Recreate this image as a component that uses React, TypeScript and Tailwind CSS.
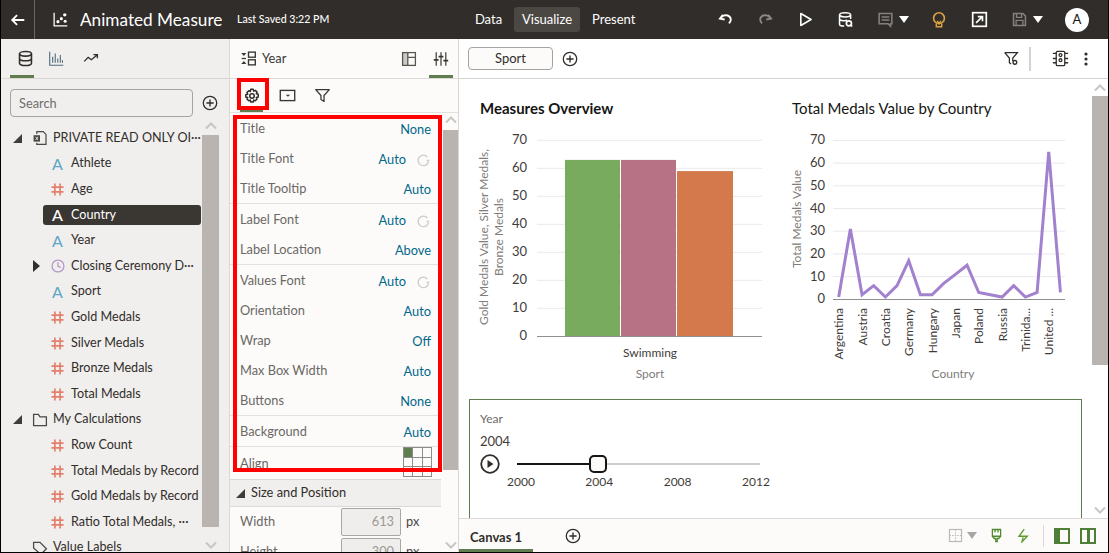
import { ReactNode } from "react";

const fontStack = "font-['Lato','Noto_Sans',sans-serif]";

type IconProps = { className?: string; children: ReactNode; size?: number };

function Ico({ className = "", children, size = 20 }: IconProps) {
  return (
    <svg
      width={size}
      height={size}
      viewBox="0 0 20 20"
      fill="none"
      stroke="currentColor"
      strokeWidth="1.5"
      className={`shrink-0 ${className}`}
    >
      {children}
    </svg>
  );
}

function PlusCircle({ className = "" }: { className?: string }) {
  return (
    <Ico size={16} className={className}>
      <circle cx="10" cy="10" r="8.4" strokeWidth="1.6" />
      <path d="M10 5.5v9M5.5 10h9" strokeWidth="1.7" />
    </Ico>
  );
}

function Caret({ className = "" }: { className?: string }) {
  return (
    <svg width="10" height="7" viewBox="0 0 10 7" className={`shrink-0 ${className}`}>
      <path d="M0 0h10L5 7z" fill="currentColor" />
    </svg>
  );
}

function Chevron({ down = false }: { down?: boolean }) {
  return (
    <svg width="12" height="8" viewBox="0 0 12 8" className="shrink-0 text-[#c9c6c2]">
      <path
        d={down ? "M1 1.5l5 5 5-5" : "M1 6.5l5-5 5 5"}
        fill="none"
        stroke="currentColor"
        strokeWidth="2"
      />
    </svg>
  );
}

function Hash() {
  return (
    <svg width="13" height="13" viewBox="0 0 14 14" className="shrink-0 text-[#e2806d]">
      <path d="M4.2 0.5v13M9.8 0.5v13M0.5 4.4h13M0.5 9.6h13" stroke="currentColor" strokeWidth="1.8" />
    </svg>
  );
}

function Refresh() {
  return (
    <Ico size={15} className="text-[#cfcdca]">
      <path d="M16.5 12a7 7 0 1 1-1.2-6.5" strokeWidth="1.8" />
      <path d="M18.5 9h-5l2.5 3.4z" fill="currentColor" stroke="none" />
    </Ico>
  );
}

function Filter({ className = "" }: { className?: string }) {
  return (
    <Ico size={17} className={className}>
      <path d="M2 3h16l-6.2 7v7l-3.6-2.4V10z" strokeLinejoin="round" />
    </Ico>
  );
}

function HeaderIcons() {
  return (
    <div className="flex items-center text-white">
      <div className="w-[40px] shrink-0 flex justify-center">
        <Ico size={17}>
          <path d="M7 4.500L3.500 9 9 10" strokeWidth="2.200" />
          <path d="M4 9c2-4 7-5 10-3s3 6 0 8.500" strokeWidth="2.200" />
        </Ico>
      </div>
      <div className="w-[40px] shrink-0 flex justify-center text-[#8b8885]">
        <Ico size={17}>
          <path d="M13 4.500L16.500 9 11 10" strokeWidth="2.200" />
          <path d="M16 9c-2-4-7-5-10-3s-3 6 0 8.500" strokeWidth="2.200" />
        </Ico>
      </div>
      <div className="w-[40px] shrink-0 flex justify-center">
        <Ico size={17}>
          <path d="M4.500 3l12 7-12 7z" strokeWidth="1.900" strokeLinejoin="round" />
        </Ico>
      </div>
      <div className="w-[40px] shrink-0 flex justify-center">
        <Ico size={17}>
          <ellipse cx="9.500" cy="4.500" rx="6.500" ry="2.500" strokeWidth="1.800" />
          <path d="M3 4.500v11c0 1.500 3 2.200 5.500 2.200M16 4.500v5M3 10c1.500 1.400 6 2 9 1" strokeWidth="1.800" />
          <circle cx="14" cy="14.500" r="3" strokeWidth="2" />
          <path d="M15 16.500l3 1.500" strokeWidth="2" />
        </Ico>
      </div>
      <div className="w-[40px] shrink-0 flex justify-center text-[#84817e]">
        <Ico size={17}>
          <path d="M2.500 3h15v12h-1.500v3l-3-3h-10.500z" strokeWidth="1.800" />
          <path d="M5.500 7h9M5.500 10.500h9" strokeWidth="1.800" />
        </Ico>
      </div>
      <div className="w-[10px] shrink-0 -ml-[6px] flex">
        <Caret />
      </div>
      <div className="w-[40px] shrink-0 ml-[10px] flex justify-center text-[#d9a441]">
        <Ico size={18}>
          <circle cx="10" cy="8" r="6" strokeWidth="1.800" />
          <path d="M7 14v3.500h6V14M8 11l2 3 2-3" strokeWidth="1.600" />
        </Ico>
      </div>
      <div className="w-[40px] shrink-0 flex justify-center">
        <Ico size={17}>
          <rect x="2" y="2" width="16" height="16" strokeWidth="2" />
          <path d="M6 14l7-7M8 6.500h5.500V12" strokeWidth="2" />
        </Ico>
      </div>
      <div className="w-[40px] shrink-0 flex justify-center text-[#84817e]">
        <Ico size={17}>
          <path d="M3 3h11l3 3v11H3z" strokeWidth="1.800" />
          <path d="M6.500 3v4.500h6V3M6 17v-6h8v6" strokeWidth="1.600" />
        </Ico>
      </div>
      <div className="w-[10px] shrink-0 -ml-[6px] flex">
        <Caret />
      </div>
      <div className="ml-[22px] h-[24px] w-[24px] shrink-0 rounded-full bg-white text-[#161513] text-[13px] flex items-center justify-center">
        A
      </div>
    </div>
  );
}

function Header() {
  return (
    <header className="h-[39px] shrink-0 bg-[#312d2a] text-white flex items-center">
      <div className="w-[34px] shrink-0 h-full border-r border-[#6b6763] flex items-center justify-center">
        <Ico size={18}>
          <path d="M17 10H4M9 4.500L3.500 10 9 15.500" strokeWidth="2" />
        </Ico>
      </div>
      <div className="ml-[17px] w-[19px] shrink-0">
        <Ico size={17}>
          <path d="M2.500 2v15.500H18" strokeWidth="1.500" />
          <circle cx="7" cy="12.500" r="1.800" fill="currentColor" stroke="none" />
          <circle cx="11" cy="9" r="1.800" fill="currentColor" stroke="none" />
          <circle cx="15" cy="4.500" r="2" fill="currentColor" stroke="none" />
          <circle cx="15.500" cy="12" r="1.800" fill="currentColor" stroke="none" />
        </Ico>
      </div>
      <h1 className="ml-[9px] text-[17.200px] leading-none w-[157px] shrink-0 whitespace-nowrap">
        Animated Measure
      </h1>
      <span className="text-[10.600px] font-medium w-[232px] shrink-0 whitespace-nowrap">
        Last Saved 3:22 PM
      </span>
      <nav className="flex items-center text-[13px] w-[236px] shrink-0">
        <span className="w-[39px] text-center">Data</span>
        <span className="ml-[6px] px-[8px] py-[3px] rounded-[3px] bg-[#4b4743] mr-[12px]">Visualize</span>
        <span>Present</span>
      </nav>
      <HeaderIcons />
    </header>
  );
}

type FieldKind = "text" | "num" | "time" | "group" | "folder" | "tag";

const fields: { label: string; kind: FieldKind; active?: boolean; arrow?: boolean }[] = [
  { label: "PRIVATE READ ONLY OI···", kind: "group" },
  { label: "Athlete", kind: "text" },
  { label: "Age", kind: "num" },
  { label: "Country", kind: "text", active: true },
  { label: "Year", kind: "text" },
  { label: "Closing Ceremony D···", kind: "time", arrow: true },
  { label: "Sport", kind: "text" },
  { label: "Gold Medals", kind: "num" },
  { label: "Silver Medals", kind: "num" },
  { label: "Bronze Medals", kind: "num" },
  { label: "Total Medals", kind: "num" },
  { label: "My Calculations", kind: "folder" },
  { label: "Row Count", kind: "num" },
  { label: "Total Medals by Record", kind: "num" },
  { label: "Gold Medals by Record", kind: "num" },
  { label: "Ratio Total Medals, ···", kind: "num" },
  { label: "Value Labels", kind: "tag" },
];

function FieldRow({ label, kind, active, arrow }: (typeof fields)[number]) {
  const top = kind === "group" || kind === "folder" || kind === "tag";
  if (top) {
    return (
      <div className="h-[25.600px] flex items-center text-[12.600px] text-[#302d2a]">
        <div className="w-[31px] pl-[12px] shrink-0">
          {kind !== "tag" && (
            <svg width="9" height="9" viewBox="0 0 9 9" className="text-[#3f3c39]">
              <path d="M9 0v9H0z" fill="currentColor" />
            </svg>
          )}
        </div>
        <Ico size={16} className="text-[#4a4744] mr-[5px]">
          {kind === "group" && (
            <>
              <path d="M6 5V2h8l3.500 3.500V18H6v-2" />
              <rect x="2" y="6.500" width="8" height="8" fill="currentColor" stroke="none" />
              <path d="M4.500 8.500l3 4M7.500 8.500l-3 4" stroke="#f1efed" strokeWidth="1.100" />
            </>
          )}
          {kind === "folder" && <path d="M2 17V3h6l2 3h8v11z" strokeWidth="1.600" />}
          {kind === "tag" && <path d="M2 3h8l8 8-7 7-9-8z" strokeWidth="1.600" />}
        </Ico>
        <span className="whitespace-nowrap">{label}</span>
      </div>
    );
  }
  return (
    <div className="h-[25.600px] flex items-center">
      <div className="w-[42px] shrink-0 pl-[32px]">
        {arrow && (
          <svg width="7" height="12" viewBox="0 0 7 12" className="text-[#312d2a]">
            <path d="M0 0l7 6-7 6z" fill="currentColor" />
          </svg>
        )}
      </div>
      <div
        className={`flex-1 h-[20px] flex items-center rounded-[3px] pl-[8px] ${
          active ? "bg-[#3a3632] text-white" : "text-[#302d2a]"
        }`}
      >
        <div className="w-[20px] shrink-0 flex justify-start">
          {kind === "num" && <Hash />}
          {kind === "text" && (
            <span
              className={`text-[16px] leading-none pl-[1px] ${active ? "text-white font-medium" : "text-[#5fa6c6]"}`}
            >
              A
            </span>
          )}
          {kind === "time" && (
            <Ico size={14} className="text-[#b497c9]">
              <circle cx="10" cy="10" r="8.500" strokeWidth="1.800" />
              <path d="M10 4.500V10.500l4 1.500" strokeWidth="1.800" />
            </Ico>
          )}
        </div>
        <span className="text-[12.600px] whitespace-nowrap">{label}</span>
      </div>
    </div>
  );
}

function LeftPanel() {
  return (
    <aside className="w-[229px] shrink-0 bg-[#f1efed] border-r border-[#dcdad7] flex flex-col">
      <div className="h-[40px] shrink-0 border-b border-[#d9d6d3] flex items-center text-[#312d2a] relative">
        <div className="w-[48px] h-full flex items-center justify-center relative">
          <Ico size={17}>
            <ellipse cx="10" cy="4.500" rx="7" ry="2.700" strokeWidth="1.900" />
            <path d="M3 4.500v11c0 1.500 3 2.700 7 2.700s7-1.200 7-2.700v-11M3 10c0 1.500 3 2.700 7 2.700s7-1.200 7-2.700" strokeWidth="1.900" />
          </Ico>
          <div className="absolute left-[9px] bottom-0 w-[24px] h-[3px] bg-[#5f7d4f]" />
        </div>
        <div className="w-[18px] -ml-[1px]">
          <Ico size={17} className="text-[#4f6b7d]">
            <path d="M2 2v16h16M5.500 15V8M8.500 15V4M11.500 15v-5M14.500 15V6M17 15v-3" strokeWidth="1.300" />
          </Ico>
        </div>
        <div className="ml-[17px]">
          <Ico size={16}>
            <path d="M1.500 13l5-5 4 3 7-6M13 4.500h5v4.500" strokeWidth="1.600" />
          </Ico>
        </div>
      </div>
      <div className="h-[38px] shrink-0 flex items-end pl-[9px]">
        <input
          readOnly
          placeholder="Search"
          className="w-[183px] h-[28px] border border-[#a5a3a0] rounded-[4px] bg-[#f1efed] px-[8px] text-[12.800px] placeholder:text-[#6f6c69] outline-none"
        />
        <PlusCircle className="ml-[9px] mb-[6px] text-[#312d2a]" />
      </div>
      <div className="flex-1 min-h-0 flex overflow-hidden">
        <div className="w-[200px] pt-[8.500px] shrink-0 overflow-hidden">
          {fields.map((f) => (
            <FieldRow key={f.label} {...f} />
          ))}
        </div>
        <div className="w-[17px] ml-[1px] flex flex-col items-center pt-[5px]">
          <Chevron />
          <div className="w-full h-[392px] mt-[5px] shrink-0 bg-[#b9b4af]" />
          <div className="mt-[14px]">
            <Chevron down />
          </div>
        </div>
      </div>
    </aside>
  );
}

const propGroups: { label: string; value: string; refresh?: boolean }[][] = [
  [
    { label: "Title", value: "None" },
    { label: "Title Font", value: "Auto", refresh: true },
    { label: "Title Tooltip", value: "Auto" },
  ],
  [
    { label: "Label Font", value: "Auto", refresh: true },
    { label: "Label Location", value: "Above" },
  ],
  [
    { label: "Values Font", value: "Auto", refresh: true },
    { label: "Orientation", value: "Auto" },
    { label: "Wrap", value: "Off" },
    { label: "Max Box Width", value: "Auto" },
    { label: "Buttons", value: "None" },
  ],
  [{ label: "Background", value: "Auto" }],
];

function PropRow({ label, value, refresh }: { label: string; value: string; refresh?: boolean }) {
  return (
    <div className="h-[30px] pl-[10px] pr-[10px] pt-[4px] flex items-center justify-between text-[12.800px]">
      <span className="text-[#6b6865] -mt-[2px]">{label}</span>
      <span className="flex items-center text-[#00688c]">
        {value}
        {refresh && (
          <span className="ml-[9px] w-[17px] -mr-[1px] flex justify-center">
            <Refresh />
          </span>
        )}
      </span>
    </div>
  );
}

function MiddlePanel() {
  return (
    <section className="w-[229px] shrink-0 bg-[#fcfbfa] border-r border-[#d9d6d3] flex flex-col relative">
      <div className="h-[40px] shrink-0 border-b border-[#dcdad7] flex items-center text-[#3a3733]">
        <div className="ml-[10px] w-[22px]">
          <Ico size={17}>
            <path d="M1.500 3.500h6L4.500 7z" fill="currentColor" stroke="none" />
            <path d="M1.500 16.500h6L4.500 13z" fill="currentColor" stroke="none" />
            <path d="M2 10h5" />
            <rect x="10" y="2.500" width="8" height="6" strokeWidth="1.600" />
            <rect x="10" y="11.500" width="8" height="6" strokeWidth="1.600" />
          </Ico>
        </div>
        <span className="text-[12.800px]">Year</span>
        <div className="ml-auto mr-[41px] text-[#59564f]">
          <Ico size={16}>
            <rect x="2" y="2" width="16" height="16" strokeWidth="1.600" />
            <path d="M8.500 2v16M8.500 8H18" strokeWidth="1.600" />
            <rect x="2" y="2" width="6.500" height="16" fill="currentColor" fillOpacity="0.3" stroke="none" />
          </Ico>
        </div>
        <div className="absolute right-[5px] top-0 h-[40px] w-[24px] flex items-center justify-center">
          <Ico size={16}>
            <path d="M4 1.500V18.500M10 1.500V18.500M16 1.500V18.500" strokeWidth="1.500" />
            <path d="M1 11h6M7 7h6M13 12h6" strokeWidth="2.200" />
          </Ico>
          <div className="absolute left-0 bottom-[1px] w-[24px] h-[3px] bg-[#5f7d4f]" />
        </div>
      </div>
      <div className="h-[34px] shrink-0 border-b border-[#e3e1de] flex items-center text-[#3a3733]">
        <div className="ml-[10px] w-[23px] h-full flex items-center justify-center relative text-[#312d2a]">
          <Ico size={16}>
            <circle cx="10" cy="10" r="2.800" strokeWidth="1.900" />
            <path
              d="M8.500 1.500h3l.6 2.400 2-.9 2.200 2.200-.9 2 2.400.6v3.400l-2.400.6.9 2-2.200 2.200-2-.9-.6 2.400h-3l-.6-2.400-2 .9-2.200-2.200.9-2-2.400-.6V8.300l2.400-.6-.9-2 2.200-2.200 2 .9z"
              strokeWidth="1.900"
              strokeLinejoin="round"
            />
          </Ico>
          <div className="absolute left-0 bottom-0 w-[23px] h-[3px] bg-[#5f7d4f]" />
        </div>
        <div className="ml-[16px]">
          <Ico size={17}>
            <rect x="1.500" y="4" width="17" height="12" strokeWidth="1.600" />
            <path d="M8 9h5l-2.500 2.500z" fill="currentColor" stroke="none" />
          </Ico>
        </div>
        <div className="ml-[18px]">
          <Filter />
        </div>
      </div>
      <div className="flex-1 min-h-0 flex overflow-hidden">
        <div className="w-[211px] shrink-0">
          {propGroups.map((group, i) => (
            <div key={i} className="border-b border-[#e3e1de]">
              {group.map((p) => (
                <PropRow key={p.label} {...p} />
              ))}
            </div>
          ))}
          <div className="h-[32px] pl-[10px] flex items-start justify-between text-[12.800px]">
            <span className="text-[#6b6865] mt-[7px]">Align</span>
            <div className="mr-[9px] grid grid-cols-3 w-[29px] h-[30px] border-l border-t border-[#8f8c88]">
              {Array.from({ length: 9 }).map((_, i) => (
                <div
                  key={i}
                  className={`border-r border-b border-[#8f8c88] ${i === 0 ? "bg-[#5f7d4f]" : ""}`}
                />
              ))}
            </div>
          </div>
          <div className="h-[28px] border-t border-b border-[#dcdad7] bg-[#f1efed] flex items-center pl-[6px] text-[12.800px] text-[#302d2a]">
            <svg width="9" height="9" viewBox="0 0 9 9" className="mr-[6px] text-[#3f3c39]">
              <path d="M9 0v9H0z" fill="currentColor" />
            </svg>
            Size and Position
          </div>
          <div className="pt-[1px] pl-[10px] pr-[10px] text-[12.800px] flex flex-col gap-[2px]">
            {[
              ["Width", "613"],
              ["Height", "300"],
            ].map(([label, value]) => (
              <div key={label} className="h-[28px] flex items-center">
                <span className="text-[#6b6865] w-[101px]">{label}</span>
                <div className="w-[60px] h-full border border-[#a9a6a3] rounded-[2px] bg-[#efeeec] text-[#9c9995] flex items-center justify-end pr-[6px]">
                  {value}
                </div>
                <span className="ml-[5px] text-[#4a4744]">px</span>
              </div>
            ))}
          </div>
        </div>
        <div className="w-[15px] ml-[2px] flex flex-col items-center pt-[3px]">
          <Chevron />
          <div className="w-full h-[340px] mt-[6px] shrink-0 bg-[#b9b4af]" />
          <div className="mt-[71px]">
            <Chevron down />
          </div>
        </div>
      </div>
      {/* annotation boxes from the doc screenshot */}
      <div className="absolute left-[7px] top-[39px] w-[32px] h-[32px] border-[4px] border-[#ff0000]" />
      <div className="absolute left-[3px] top-[76px] w-[209px] h-[357px] border-[4px] border-[#ff0000]" />
    </section>
  );
}

const grid70 = [0, 10, 20, 30, 40, 50, 60, 70];
const axisText = "fill-[#3f3c39] text-[13px]";
const axisTitle = "fill-[#807d7a] text-[12px]";

function BarChart() {
  const y = (v: number) => 336.3 - v * 2.8;
  return (
    <svg width="320" height="262" viewBox="460 120 320 262" className="block">
      {grid70.slice(1).map((v) => (
        <line key={v} x1="537" x2="762" y1={y(v)} y2={y(v)} stroke="#e8e8ef" strokeWidth="1" />
      ))}
      {grid70.map((v) => (
        <text key={v} x="527" y={y(v) + 4} textAnchor="end" className={axisText}>
          {v}
        </text>
      ))}
      <rect x="565" y={y(63)} width="55" height={63 * 2.8} fill="#78ab5e" />
      <rect x="621" y={y(63)} width="55" height={63 * 2.8} fill="#b87286" />
      <rect x="677" y={y(59)} width="56" height={59 * 2.8} fill="#d3794b" />
      <line x1="537" x2="762" y1="336.500" y2="336.500" stroke="#8f8f8f" />
      <text x="650" y="357" textAnchor="middle" className="fill-[#3f3c39] text-[12px]">
        Swimming
      </text>
      <text x="650" y="378" textAnchor="middle" className={axisTitle}>
        Sport
      </text>
      <text transform="translate(488 237) rotate(-90)" textAnchor="middle" className={axisTitle}>
        Gold Medals Value, Silver Medals,
      </text>
      <text transform="translate(503 237) rotate(-90)" textAnchor="middle" className={axisTitle}>
        Bronze Medals
      </text>
    </svg>
  );
}

const lineValues = [1, 31, 2, 6, 1, 6, 17, 2, 2, 7, 11, 15, 3, 2, 1, 6, 1, 3, 65, 3];
const countries = ["Argentina", "Austria", "Croatia", "Germany", "Hungary", "Japan", "Poland", "Russia", "Trinida...", "United ..."];

function LineChart() {
  const y = (v: number) => 299.3 - v * 2.27;
  const x = (i: number) => 838.7 + i * 11.67;
  const points = lineValues.map((v, i) => `${x(i)},${y(v)}`).join(" ");
  return (
    <svg width="312" height="262" viewBox="780 120 312 262" className="block">
      {grid70.slice(1).map((v) => (
        <line key={v} x1="833" x2="1065" y1={y(v)} y2={y(v)} stroke="#e8e8ef" />
      ))}
      {grid70.map((v) => (
        <text key={v} x="825" y={y(v) + 4} textAnchor="end" className={axisText}>
          {v}
        </text>
      ))}
      <line x1="833" x2="1065" y1="299.500" y2="299.500" stroke="#8f8f8f" />
      <polyline points={points} fill="none" stroke="#a281ce" strokeWidth="3" strokeLinejoin="miter" />
      {countries.map((c, i) => (
        <text
          key={c}
          transform={`translate(${x(i * 2) + 4.500} 308) rotate(-90)`}
          textAnchor="end"
          className="fill-[#3f3c39] text-[12px]"
        >
          {c}
        </text>
      ))}
      <text x="953" y="378" textAnchor="middle" className={axisTitle}>
        Country
      </text>
      <text transform="translate(801 219) rotate(-90)" textAnchor="middle" className={axisTitle}>
        Total Medals Value
      </text>
    </svg>
  );
}

function YearSlider() {
  return (
    <div className="mt-[17px] ml-[10px] w-[613px] h-[130px] border border-[#5f7d4f] border-b-0 px-[10px] pt-[11px]">
      <div className="text-[12px] leading-[16px] text-[#6b6865]">Year</div>
      <div className="mt-[6px] text-[13px] leading-[16px] text-[#3f3c39]">2004</div>
      <div className="mt-[5px] flex items-center h-[20px]">
        <svg width="20" height="20" viewBox="0 0 20 20" className="shrink-0 text-[#312d2a]">
          <circle cx="10" cy="10" r="8.800" fill="none" stroke="currentColor" strokeWidth="1.800" />
          <path d="M7.500 6l6 4-6 4z" fill="currentColor" />
        </svg>
        <div className="ml-[17px] w-[243px] h-[2px] bg-[#d0cdc9] relative">
          <div className="absolute left-0 top-0 w-[73px] h-[2px] bg-[#161513]" />
          <div className="absolute left-[72px] -top-[8px] w-[18px] h-[18px] rounded-[5px] border-[2px] border-[#161513] bg-[#fcfbfa]" />
        </div>
      </div>
      <div className="ml-[27px] flex gap-[50.500px] text-[12px] leading-[16px] text-[#3f3c39]">
        <span>2000</span>
        <span>2004</span>
        <span>2008</span>
        <span>2012</span>
      </div>
    </div>
  );
}

function RightPanel() {
  return (
    <main className="flex-1 min-w-0 flex flex-col bg-white">
      <div className="h-[40px] shrink-0 border-b border-[#d6d3cf] flex items-center pl-[9px] pr-[12px]">
        <div className="w-[85px] h-[23px] border border-[#a5a3a0] rounded-[4px] bg-[#fcfbfa] text-[13px] text-[#302d2a] flex items-center justify-center">
          Sport
        </div>
        <PlusCircle className="ml-[9px] text-[#312d2a]" />
        <div className="ml-auto flex items-center text-[#312d2a]">
          <Ico size={17}>
            <path d="M2 3h15l-5.500 6.500V13M2 3l5.500 6.500V15l2 1.500" />
            <circle cx="14" cy="14.500" r="2.200" strokeWidth="1.600" />
          </Ico>
          <div className="ml-[9px] w-[2px] h-[24px] bg-[#d6d3cf]" />
          <div className="ml-[21px]">
            <Ico size={17}>
              <rect x="5" y="1.500" width="10" height="17" rx="1.500" />
              <circle cx="10" cy="6" r="1.700" />
              <circle cx="10" cy="12" r="1.700" />
              <path d="M1 4h4M1 10h4M1 15h4M15 4h4M15 10h4M15 15h4" />
            </Ico>
          </div>
          <svg width="4" height="14" viewBox="0 0 4 14" className="ml-[15px] mr-[8px]">
            <circle cx="2" cy="2" r="1.600" fill="currentColor" />
            <circle cx="2" cy="7" r="1.600" fill="currentColor" />
            <circle cx="2" cy="12" r="1.600" fill="currentColor" />
          </svg>
        </div>
      </div>
      <div className="flex-1 min-h-0 flex overflow-hidden">
        <div className="w-[633px] shrink-0">
          <div className="flex ml-[1px]">
            <div className="w-[320px] shrink-0">
              <h2 className="pt-[20px] pl-[20px] h-[41px] text-[15px] leading-[18px] font-bold text-[#161513]">
                Measures Overview
              </h2>
              <BarChart />
            </div>
            <div className="w-[312px] shrink-0">
              <h2 className="pt-[20px] pl-[12px] h-[41px] text-[15px] leading-[18px] text-[#161513]">
                Total Medals Value by Country
              </h2>
              <LineChart />
            </div>
          </div>
          <YearSlider />
        </div>
        <div className="w-[16px] ml-auto flex flex-col items-center pt-[5px]">
          <Chevron />
          <div className="w-full h-[269px] mt-[4px] shrink-0 bg-[#b9b4af]" />
          <div className="mt-[141px]">
            <Chevron down />
          </div>
        </div>
      </div>
      <div className="h-[34px] shrink-0 border-t border-[#dcdad7] flex items-center bg-[#fcfbfa] pr-[12px]">
        <div className="w-[74px] h-full flex items-center pl-[11px] pt-[4px] relative text-[13px] font-bold text-[#302d2a]">
          Canvas 1
          <div className="absolute left-0 bottom-0 w-[74px] h-[3px] bg-[#5f7d4f]" />
        </div>
        <PlusCircle className="ml-[32px] text-[#312d2a]" />
        <div className="ml-auto flex items-center">
          <Ico size={15} className="text-[#bdbab6]">
            <rect x="2" y="2" width="16" height="16" strokeWidth="1.600" />
            <path d="M10 2v16M2 10h16" strokeDasharray="2 1.500" strokeWidth="1.400" />
          </Ico>
          <Caret className="ml-[4px] text-[#a9a6a3]" />
          <div className="ml-[12px] text-[#4f8a2f]">
            <Ico size={15}>
              <path d="M4.500 2h11v9h-11zM8 2v4M12 2v4M4.500 11l2.500 3h2v4h2v-4h2l2.500-3" strokeWidth="1.700" />
            </Ico>
          </div>
          <div className="ml-[12px] text-[#5c9a2e]">
            <Ico size={15}>
              <path d="M11 1.500L4 11h11l-7 7.500 1.500-6" strokeWidth="1.800" />
            </Ico>
          </div>
          <div className="ml-[12px] w-[1px] h-[22px] bg-[#dcdad7]" />
          <div className="ml-[10px] w-[16px] h-[16px] border-[2px] border-[#4f7f36] border-l-[6px]" />
          <div className="ml-[10px] w-[16px] h-[16px] border-[2px] border-[#4f7f36] flex justify-center">
            <div className="w-[3px] h-full bg-[#4f7f36]" />
          </div>
        </div>
      </div>
    </main>
  );
}

export default function App() {
  return (
    <div
      className={`w-[1109px] h-[553px] border-l border-r border-b border-black overflow-hidden flex flex-col ${fontStack}`}
    >
      <Header />
      <div className="flex-1 min-h-0 flex">
        <LeftPanel />
        <MiddlePanel />
        <RightPanel />
      </div>
    </div>
  );
}
